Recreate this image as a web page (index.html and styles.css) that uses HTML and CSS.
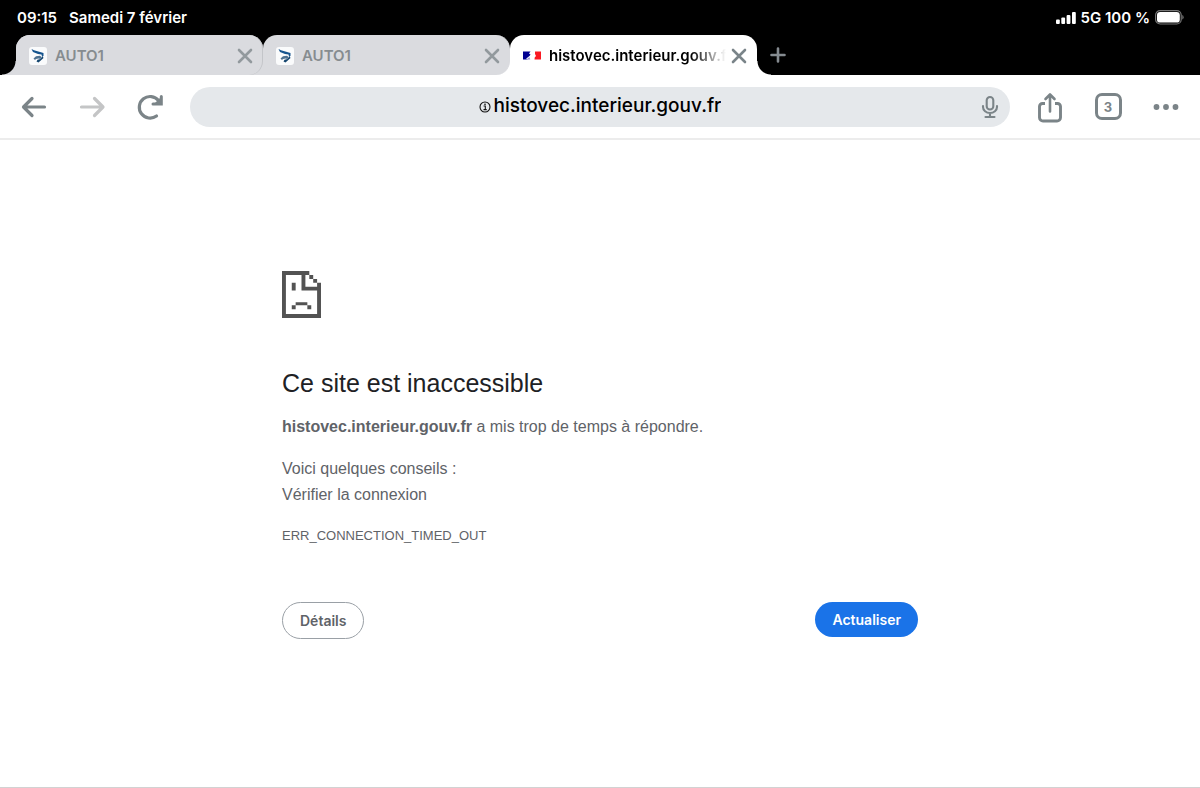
FILE: index.html
```html
<!DOCTYPE html>
<html lang="fr">
<head>
<meta charset="utf-8">
<meta name="viewport" content="width=device-width, initial-scale=1">
<title>histovec.interieur.gouv.fr</title>
<link rel="stylesheet" href="styles.css">
</head>
<body>
<svg class="defs" aria-hidden="true">
  <symbol id="close" viewBox="0 0 16 16"><path d="M2 2l12 12M14 2L2 14" fill="none" stroke="currentColor" stroke-width="2.6" stroke-linecap="round"/></symbol>
  <symbol id="auto1" viewBox="0 0 18 18">
    <rect width="18" height="18" rx="3" fill="#fafbfc"/>
    <path d="M2.500 2L5 3.200L14.500 6V9L13 9.500L12.500 7.500L9 7L4 5z" fill="#15548e"/>
    <path d="M4.500 11.500L7 9.200L11 8.800L12.500 10L11.500 12L9.500 11.500L7 12L6 13z" fill="#4d7191"/>
    <path d="M13.500 9L14.500 11L9.500 15.500L7.500 14.500L8.500 12.800L11.500 12z" fill="#14456f"/>
  </symbol>
</svg>
<header class="status">
  <div class="status-group"><time>09:15</time><span>Samedi 7 février</span></div>
  <div class="status-right">
    <svg class="signal" viewBox="0 0 20 12" aria-hidden="true"><g fill="#fff"><rect y="7.500" width="3.800" height="4.500" rx="1"/><rect x="5.300" y="5.500" width="3.800" height="6.500" rx="1"/><rect x="10.600" y="3" width="3.800" height="9" rx="1"/><rect x="16" width="3.800" height="12" rx="1"/></g></svg>
    <span>5G 100 %</span>
    <svg class="battery" viewBox="0 0 29 15" aria-hidden="true"><rect x=".6" y=".6" width="25.600" height="13.400" rx="4.500" fill="none" stroke="#777" stroke-width="1.200"/><rect x="2" y="2" width="22.800" height="10.600" rx="3.200" fill="#fff"/><path d="M27.300 5v4.600q1.300-.6 1.300-2.300t-1.300-2.300z" fill="#777"/></svg>
  </div>
</header>
<nav class="tabs" aria-label="Onglets">
  <div class="tab tab-first">
    <svg class="favicon" aria-hidden="true"><use href="#auto1"/></svg>
    <a class="tab-title" href="#">AUTO1</a>
    <button class="tab-close" aria-label="Fermer"><svg class="close-icon"><use href="#close"/></svg></button>
  </div>
  <div class="tab tab-second">
    <svg class="favicon" aria-hidden="true"><use href="#auto1"/></svg>
    <a class="tab-title" href="#">AUTO1</a>
    <button class="tab-close" aria-label="Fermer"><svg class="close-icon"><use href="#close"/></svg></button>
  </div>
  <div class="tab tab-active">
    <svg class="favicon" viewBox="0 0 18 18" aria-hidden="true"><path d="M0 4.500h7.500L6 6.500l1.500 1L6.500 9l-2 1.500L3 12l3 .5H0z" fill="#000091"/><path d="M12 4.500h6v8h-6.500l.2-2 1.300-1.500-1-2z" fill="#fa1a22"/><path d="M5 11l1.500-.8.8 2.300H4z" fill="#9c9cd4"/></svg>
    <a class="tab-title" href="#">histovec.interieur.gouv.fr</a>
    <button class="tab-close" aria-label="Fermer"><svg class="close-icon"><use href="#close"/></svg></button>
  </div>
  <button class="new-tab" aria-label="Nouvel onglet"><svg class="close-icon" viewBox="0 0 16 16"><path d="M8 1.500v13M1.500 8h13" stroke="currentColor" stroke-width="2.600" stroke-linecap="round"/></svg></button>
</nav>
<div class="toolbar">
  <button class="tool" aria-label="Retour"><svg class="icon" viewBox="0 0 28 28"><path d="M24.500 14H4M12 5.500L3.500 14l8.500 8.500" fill="none" stroke="currentColor" stroke-width="3.200" stroke-linecap="round" stroke-linejoin="round"/></svg></button>
  <button class="tool tool-off" aria-label="Avancer"><svg class="icon" viewBox="0 0 28 28"><path d="M3.500 14h21M16.500 5.500l8.500 8.500-8.500 8.500" fill="none" stroke="currentColor" stroke-width="3.200" stroke-linecap="round" stroke-linejoin="round"/></svg></button>
  <button class="tool" aria-label="Recharger"><svg class="icon" viewBox="0 0 28 28"><path d="M20.500 23A10.800 10.800 0 1 1 22.500 7.500" fill="none" stroke="currentColor" stroke-width="3.200" stroke-linecap="round"/><path d="M25.300 3.500v7.500h-8.300" fill="none" stroke="currentColor" stroke-width="3" stroke-linecap="round" stroke-linejoin="miter"/><path d="M25 4v7h-7z" fill="currentColor"/></svg></button>
  <div class="omnibox">
    <label class="address"><svg class="info" viewBox="0 0 12 12" role="img" aria-label="Adresse"><circle cx="6" cy="6" r="5" fill="none" stroke="#111" stroke-width="1.100"/><path d="M4.600 5h1.700v3.500M4.500 8.600h3.200" fill="none" stroke="#111" stroke-width="1.100"/><circle cx="6" cy="3.200" r=".8"/></svg><input class="address-input" type="text" value="histovec.interieur.gouv.fr"></label>
    <button class="mic" aria-label="Recherche vocale"><svg class="mic-icon" viewBox="0 0 18 24"><g fill="none" stroke="currentColor" stroke-width="2.100" stroke-linecap="round"><rect x="5.700" y="2" width="6.600" height="12.500" rx="3.300"/><path d="M2 11v1a7 6 0 0 0 14 0v-1M9 18v4M4.500 22h9"/></g></svg></button>
  </div>
  <button class="tool" aria-label="Partager"><svg class="share" viewBox="0 0 26 32"><path d="M8 12.500H5.500a3 3 0 0 0-3 3V26.500a3.500 3.500 0 0 0 3.500 3.500h14a3.500 3.500 0 0 0 3.500-3.500V15.500a3 3 0 0 0-3-3H18" fill="none" stroke="currentColor" stroke-width="2.900"/><path d="M13 20.500V4M8.500 8L13 3.500 17.500 8" fill="none" stroke="currentColor" stroke-width="2.600" stroke-linecap="round" stroke-linejoin="round"/></svg></button>
  <button class="tool" aria-label="Onglets ouverts"><span class="count">3</span></button>
  <button class="tool" aria-label="Menu"><svg class="icon" viewBox="0 0 28 28"><g fill="currentColor"><circle cx="4.500" cy="14" r="2.900"/><circle cx="14" cy="14" r="2.900"/><circle cx="23.500" cy="14" r="2.900"/></g></svg></button>
</div>
<main class="page">
  <section class="error">
    <svg class="sad" viewBox="0 0 20 24" aria-hidden="true"><path fill="#535353" d="M0 0h14v2h-2v6h6v-2h2v18H0zM2 2v20h16V10h-8V2zM14 2h2v2h-2zM16 4h2v2h-2zM5 6h2v4H5zM7 16h6v1.500H7zM5 17.500h2v2H5zM13 17.500h2v2h-2z" fill-rule="evenodd"/></svg>
    <h1 class="title">Ce site est inaccessible</h1>
    <p class="text">
      <strong>histovec.interieur.gouv.fr</strong> a mis trop de temps à répondre.</p>
    <p class="text">Voici quelques conseils :<br>Vérifier la connexion</p>
    <p class="code">ERR_CONNECTION_TIMED_OUT</p>
    <div class="actions"><button class="btn details">Détails</button><button class="btn reload">Actualiser</button></div>
  </section>
</main>
</body>
</html>
```

FILE: styles.css
```css
* { box-sizing: border-box; }
body {
  margin: 0;
  min-height: 100vh;
  display: flex;
  flex-direction: column;
  background: #fff;
  font-family: Inter, "Liberation Sans", sans-serif;
}
button { border: 0; padding: 0; background: none; color: inherit; font: inherit; }
svg { display: block; flex: none; }
.defs { display: none; }

.status {
  display: flex;
  justify-content: space-between;
  height: 35px;
  padding: 0 16px 0 17px;
  background: #000;
  color: #fff;
  font-size: 15px;
  font-weight: 600;
  line-height: 35px;
}
.status-group { display: flex; gap: 12px; }
.status-right { display: flex; align-items: center; gap: 5px; }
.signal { width: 20px; height: 12px; }
.battery { width: 29px; height: 15px; }

.tabs { display: flex; height: 40px; padding-left: 16px; background: #000; }
.tab {
  position: relative;
  isolation: isolate;
  display: flex;
  align-items: center;
  flex: 0 1 247px;
  min-width: 0;
  padding: 1px 10px 0 13px;
  border-radius: 14px 14px 0 0;
  background: #dadbdf;
  color: #868c90;
}
/* Rounded face of an inactive tab, over the corner that belongs to its neighbour */
.tab-first::before,
.tab-second::before {
  content: "";
  position: absolute;
  z-index: -1;
  inset: 0;
  border-radius: 14px 14px 14px 0;
  border-right: 1px solid #c3c5c9;
  background: #dadbdf;
}
.tab-second { background: linear-gradient(#fff, #fff) right bottom / 14px 14px no-repeat; }
.tab-second::before { border-right-color: #dadbdf; }
/* Flares where the outer tabs meet the toolbar */
.tab-first::after,
.tab-active::after {
  content: "";
  position: absolute;
  bottom: 0;
  width: 14px;
  height: 14px;
}
.tab-first::after { right: 100%; background: radial-gradient(circle at 0 0, #000 13px, #dadbdf 14px); }
.tab-active::after { left: 100%; background: radial-gradient(circle at 100% 0, #000 13px, #fff 14px); }
.tab-active { background: #fff; color: #000; }
.favicon { width: 18px; height: 18px; }
.tab-title {
  flex: 1;
  min-width: 0;
  margin: 0 5px 0 8px;
  overflow: hidden;
  color: inherit;
  font-size: 15px;
  font-weight: 600;
  line-height: 20px;
  text-decoration: none;
  white-space: nowrap;
}
.tab-active .tab-title { mask-image: linear-gradient(to right, #000 80%, transparent 100%); }
.tab-close { color: #92999d; }
.tab-active .tab-close { color: #7a8489; }
.close-icon { width: 16px; height: 16px; }
.new-tab { margin-left: 13px; color: #858b90; }

.toolbar {
  display: flex;
  align-items: center;
  height: 65px;
  padding: 0 5px;
  border-bottom: 2px solid #ececec;
  color: #7b8488;
}
.tool { display: grid; place-items: center; flex: none; width: 58px; height: 44px; }
.tool-off { color: #c4c5c6; }
.icon { width: 28px; height: 28px; }
.share { width: 26px; height: 32px; }
.omnibox {
  display: flex;
  align-items: center;
  flex: 1;
  min-width: 0;
  height: 40px;
  margin: 0 11px;
  padding: 0 11px;
  border-radius: 20px;
  background: #e5e8eb;
}
.address { display: flex; flex: 1; align-items: center; justify-content: center; gap: 3px; min-width: 0; padding-left: 18px; }
.info { width: 12px; height: 12px; }
.address-input {
  field-sizing: content;
  min-width: 0;
  padding: 0 0 2px;
  border: 0;
  background: none;
  color: #000;
  font: 500 19px/26px Inter, "Liberation Sans", sans-serif;
}
.mic-icon { width: 18px; height: 24px; }
.count {
  display: grid;
  place-items: center;
  width: 27px;
  height: 27px;
  border: 3px solid currentColor;
  border-radius: 7px;
  font-size: 13px;
  font-weight: 700;
}

.page { flex: 1; padding: 131px 24px 48px; border-bottom: 1px solid #d2d2d2; }
.error { max-width: 636px; margin: 0 auto; color: #5f6368; font-family: "Liberation Sans", Arial, sans-serif; }
.sad { width: 39px; height: 47px; }
.title { margin: 50px 0 0; color: #202124; font-size: 25px; font-weight: 400; line-height: 30px; }
.text { margin: 16px 0 0; font-size: 16px; line-height: 26px; }
.code { margin: 16px 0 0; font-size: 13px; line-height: 24px; }
.actions { display: flex; justify-content: space-between; align-items: flex-start; margin-top: 54px; }
.btn { border-radius: 20px; font: 600 14px/19px Inter, "Liberation Sans", sans-serif; }
.details { padding: 8px 17px; border: 1px solid #9aa0a6; color: #5f6368; }
.reload { padding: 8px 17px; background: #1a73e8; color: #fff; }
```
